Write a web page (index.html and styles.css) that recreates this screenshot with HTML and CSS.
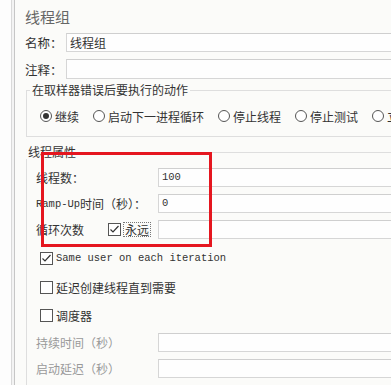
FILE: index.html
```html
<!DOCTYPE html>
<html lang="zh-CN">
<head>
    <meta charset="UTF-8">
    <title>线程组</title>
    <link rel="stylesheet" href="styles.css">
</head>
<body>
    <div class="app">
        <div class="sidebar"></div>
        <div class="divider"></div>
        <div class="panel">
            <h1 class="title">线程组</h1>

            <div class="form-row first">
                <label class="row-label">名称：</label>
                <div class="text-field">线程组</div>
            </div>
            <div class="form-row">
                <label class="row-label">注释：</label>
                <div class="text-field tall"></div>
            </div>

            <fieldset class="group error-group">
                <legend>在取样器错误后要执行的动作</legend>
                <div class="radio-row">
                    <span class="radio-item"><span class="radio checked"></span>继续</span>
                    <span class="radio-item"><span class="radio"></span>启动下一进程循环</span>
                    <span class="radio-item"><span class="radio"></span>停止线程</span>
                    <span class="radio-item"><span class="radio"></span>停止测试</span>
                    <span class="radio-item"><span class="radio"></span>立即停止测试</span>
                </div>
            </fieldset>

            <fieldset class="group thread-group">
                <legend>线程属性</legend>
                <div class="prop-row first">
                    <span class="prop-label">线程数：</span>
                    <div class="text-field value">100</div>
                </div>
                <div class="prop-row">
                    <span class="prop-label"><span class="mono">Ramp-Up</span>时间（秒）：</span>
                    <div class="text-field value">0</div>
                </div>
                <div class="prop-row">
                    <span class="prop-label loop-label">
                        循环次数
                        <span class="forever">
                            <svg class="checkbox" width="13" height="13" viewBox="0 0 13 13">
                                <rect x="0.5" y="0.5" width="12" height="12" fill="#fff" stroke="#555"/>
                                <polyline points="2.5,6.5 5,9 10.5,3" fill="none" stroke="#333" stroke-width="1.2"/>
                            </svg>
                            <span class="focus-text">永远</span>
                        </span>
                    </span>
                    <div class="text-field value"></div>
                </div>

                <div class="check-row same-user">
                    <svg class="checkbox" width="13" height="13" viewBox="0 0 13 13">
                        <rect x="0.5" y="0.5" width="12" height="12" fill="#fff" stroke="#555"/>
                        <polyline points="2.5,6.5 5,9 10.5,3" fill="none" stroke="#333" stroke-width="1.2"/>
                    </svg>
                    <span class="mono">Same user on each iteration</span>
                </div>
                <div class="check-row delay">
                    <span class="box"></span>
                    <span>延迟创建线程直到需要</span>
                </div>
                <div class="check-row scheduler">
                    <span class="box"></span>
                    <span>调度器</span>
                </div>

                <div class="prop-row disabled duration">
                    <span class="prop-label">持续时间（秒）</span>
                    <div class="text-field value"></div>
                </div>
                <div class="prop-row disabled">
                    <span class="prop-label">启动延迟（秒）</span>
                    <div class="text-field value"></div>
                </div>
            </fieldset>
        </div>
    </div>

    <!-- annotation drawn over the screenshot -->
    <div class="highlight"></div>
</body>
</html>
```

FILE: styles.css
```css
body {
    margin: 0;
    background: #fbfbf9;
    color: #333;
    font-family: "Noto Sans CJK SC", "Noto Sans", sans-serif;
    font-size: 12px;
    overflow: hidden;
}

.app {
    display: flex;
    height: 385px;
}

.sidebar {
    width: 11px;
    flex-shrink: 0;
    background: #fdfdfd;
    border-right: 1px solid #d9d9d9;
}

.divider {
    width: 2px;
    flex-shrink: 0;
    background: #f3f3f3;
}

.panel {
    flex-shrink: 0;
    width: 460px;
    border-left: 1px solid #c6c6c6;
    padding-left: 10px;
}

.title {
    margin: 7px 0 0;
    font-size: 15px;
    font-weight: normal;
    line-height: 20px;
    color: #666;
}

.mono {
    font-family: "Liberation Mono", monospace;
    font-size: 10.5px;
}

.form-row {
    display: flex;
    align-items: center;
    margin-top: 7px;
}

.form-row.first {
    margin-top: 6px;
}

.row-label {
    width: 41px;
    font-size: 12.5px;
}

.text-field {
    flex: 1;
    height: 17px;
    line-height: 17px;
    padding-left: 3px;
    background: #fefefe;
    border: 1px solid #d6d6d6;
    border-top-color: #cfcfcf;
}

.text-field.tall {
    height: 18px;
}

.group {
    margin: 0 0 0 1px;
    padding: 0 0 0 13px;
    border: 1px solid #dedede;
    border-right: none;
}

.group legend {
    margin-left: -10px;
    padding: 0 2px;
    line-height: 14px;
    font-size: 12px;
}

.error-group {
    margin-top: 4px;
    padding-bottom: 12px;
}

.radio-row {
    display: flex;
    gap: 14px;
    margin-top: 11px;
    height: 16px;
    align-items: center;
    white-space: nowrap;
}

.radio-item {
    display: flex;
    align-items: center;
    gap: 3px;
}

.radio {
    width: 10px;
    height: 10px;
    border: 1px solid #555;
    border-radius: 50%;
    background: #fff;
    position: relative;
}

.radio.checked::after {
    content: "";
    position: absolute;
    left: 2px;
    top: 2px;
    width: 6px;
    height: 6px;
    border-radius: 50%;
    background: #333;
}

.thread-group {
    margin-top: 8px;
    padding-left: 9px;
    height: 240px;
}

.prop-row {
    display: flex;
    align-items: center;
    margin-top: 7px;
}

.prop-row.first {
    margin-top: 9px;
}

.prop-label {
    width: 122px;
    flex-shrink: 0;
    display: flex;
    align-items: center;
    white-space: nowrap;
}

.value {
    font-family: "Liberation Mono", monospace;
    font-size: 10.5px;
}

.loop-label {
    gap: 24px;
}

.forever {
    display: flex;
    align-items: center;
    gap: 2px;
}

.focus-text {
    border: 1px dotted #777;
    padding: 0 1px;
    line-height: 13px;
}

.check-row {
    display: flex;
    align-items: center;
    gap: 3px;
    height: 16px;
    margin-left: 4px;
}

.check-row.same-user {
    margin-top: 11px;
}

.check-row.delay {
    margin-top: 13px;
}

.check-row.scheduler {
    margin-top: 12px;
}

.box {
    width: 11px;
    height: 11px;
    border: 1px solid #555;
    background: #fff;
}

.prop-row.disabled {
    color: #999;
}

.prop-row.duration {
    margin-top: 10px;
}

.highlight {
    position: absolute;
    left: 41px;
    top: 152px;
    width: 165px;
    height: 89px;
    border: 3px solid #e5161f;
}
```
